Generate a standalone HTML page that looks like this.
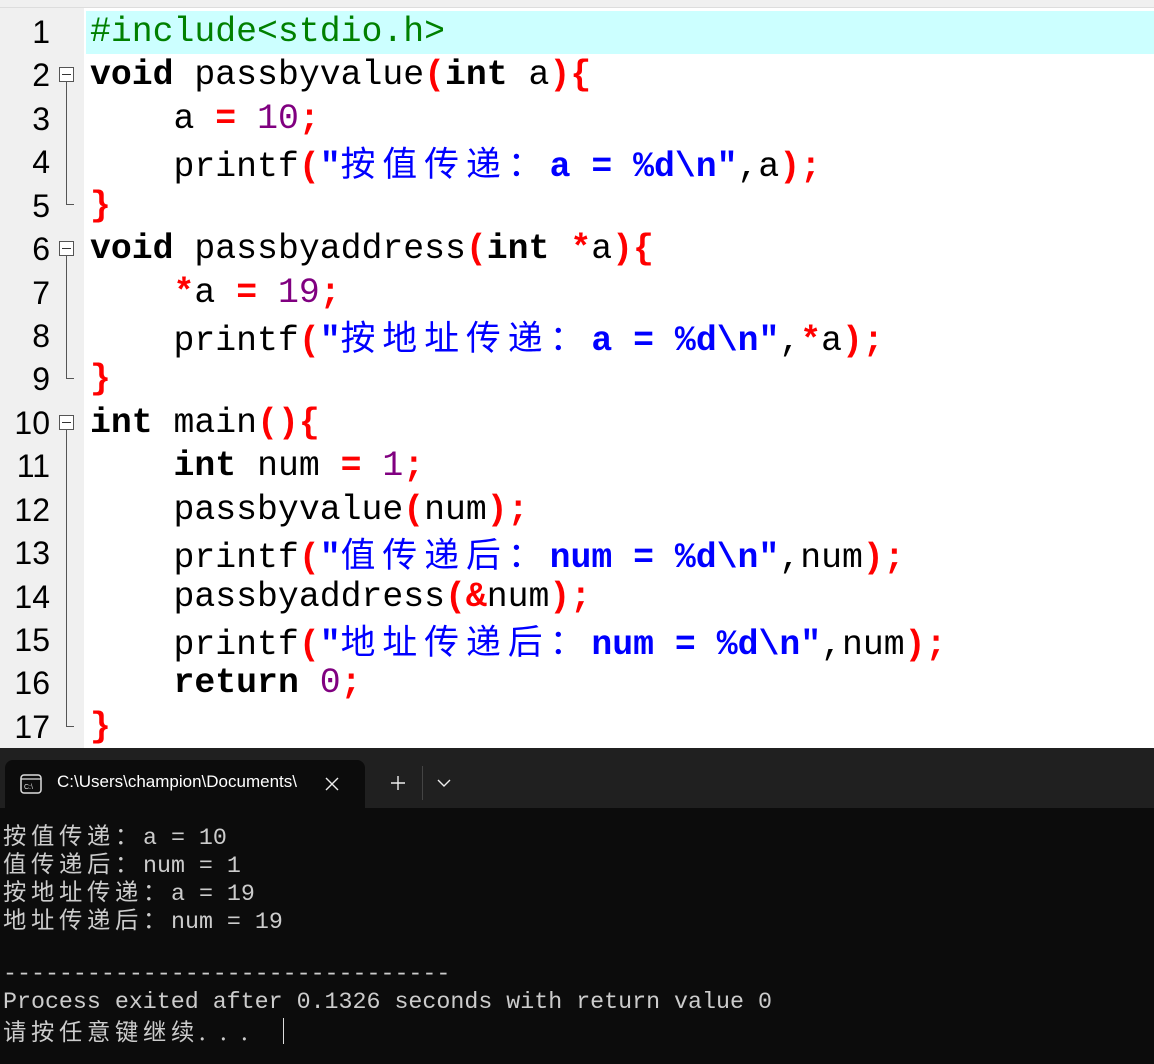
<!DOCTYPE html>
<html><head><meta charset="utf-8"><style>
*{margin:0;padding:0;box-sizing:border-box}
body{width:1154px;height:1064px;overflow:hidden;background:#fff;position:relative;font-family:"Liberation Mono","Noto Sans CJK SC",monospace}
#ruler{position:absolute;left:0;top:0;width:1154px;height:8px;background:#f0f0f0;border-bottom:1px solid #ddd}
#gutter{position:absolute;left:0;top:8px;width:84px;height:740px;background:#f0f0f0}
#hl{position:absolute;left:86px;top:11px;width:1068px;height:43px;background:#ccffff}
.ln{position:absolute;left:0;width:50px;text-align:right;font-size:32px;line-height:43.4px;color:#000;font-family:"Liberation Sans",sans-serif}
.cl{position:absolute;left:90px;font-size:34.8px;line-height:43.4px;white-space:pre;color:#000}
.k{font-weight:bold}
.s{color:#0000ff;font-weight:bold}
.n{color:#800080}
.o{color:#ff0000;font-weight:bold}
.p{color:#008000}
.c{font-family:"Noto Sans CJK SC",sans-serif;letter-spacing:7px;font-weight:normal}
.box{position:absolute;left:59px;width:15px;height:15px;border:1px solid #555;background:#fff}
.box:after{content:"";position:absolute;left:2px;top:6px;width:9px;height:1px;background:#333}
.vl{position:absolute;left:66px;width:1px;background:#555}
.hz{position:absolute;left:66px;width:8px;height:1px;background:#555}
#term{position:absolute;left:0;top:748px;width:1154px;height:316px;background:#0c0c0c}
#tabbar{position:absolute;left:0;top:0;width:1154px;height:60px;background:#202020}
#tab{position:absolute;left:5px;top:12px;width:360px;height:48px;background:#0c0c0c;border-radius:8px 8px 0 0}
.tt{position:absolute;left:3px;font-size:23.3px;line-height:28px;color:#cccccc;white-space:pre}
.tc{font-family:"Noto Sans CJK SC",sans-serif;letter-spacing:4.7px}
</style></head><body>
<div id="ruler"></div>
<div id="gutter"></div>
<div id="hl"></div>

<div class="ln" style="top:11px">1</div>
<div class="ln" style="top:54px">2</div>
<div class="ln" style="top:98px">3</div>
<div class="ln" style="top:141px">4</div>
<div class="ln" style="top:185px">5</div>
<div class="ln" style="top:228px">6</div>
<div class="ln" style="top:272px">7</div>
<div class="ln" style="top:315px">8</div>
<div class="ln" style="top:358px">9</div>
<div class="ln" style="top:402px">10</div>
<div class="ln" style="top:445px">11</div>
<div class="ln" style="top:489px">12</div>
<div class="ln" style="top:532px">13</div>
<div class="ln" style="top:576px">14</div>
<div class="ln" style="top:619px">15</div>
<div class="ln" style="top:662px">16</div>
<div class="ln" style="top:706px">17</div>

<div class="box" style="top:67px"></div>
<div class="vl" style="top:82px;height:122px"></div><div class="hz" style="top:204px"></div>
<div class="box" style="top:241px"></div>
<div class="vl" style="top:256px;height:122px"></div><div class="hz" style="top:378px"></div>
<div class="box" style="top:415px"></div>
<div class="vl" style="top:430px;height:296px"></div><div class="hz" style="top:726px"></div>

<div class="cl" style="top:11px"><span class="p">#include&lt;stdio.h&gt;</span></div>
<div class="cl" style="top:54px"><span class="k">void</span> passbyvalue<span class="o">(</span><span class="k">int</span> a<span class="o">){</span></div>
<div class="cl" style="top:98px">    a <span class="o">=</span> <span class="n">10</span><span class="o">;</span></div>
<div class="cl" style="top:141px">    printf<span class="o">(</span><span class="s">"<span class="c">按值传递：</span>a = %d\n"</span>,a<span class="o">);</span></div>
<div class="cl" style="top:185px"><span class="o">}</span></div>
<div class="cl" style="top:228px"><span class="k">void</span> passbyaddress<span class="o">(</span><span class="k">int</span> <span class="o">*</span>a<span class="o">){</span></div>
<div class="cl" style="top:272px">    <span class="o">*</span>a <span class="o">=</span> <span class="n">19</span><span class="o">;</span></div>
<div class="cl" style="top:315px">    printf<span class="o">(</span><span class="s">"<span class="c">按地址传递：</span>a = %d\n"</span>,<span class="o">*</span>a<span class="o">);</span></div>
<div class="cl" style="top:358px"><span class="o">}</span></div>
<div class="cl" style="top:402px"><span class="k">int</span> main<span class="o">(){</span></div>
<div class="cl" style="top:445px">    <span class="k">int</span> num <span class="o">=</span> <span class="n">1</span><span class="o">;</span></div>
<div class="cl" style="top:489px">    passbyvalue<span class="o">(</span>num<span class="o">);</span></div>
<div class="cl" style="top:532px">    printf<span class="o">(</span><span class="s">"<span class="c">值传递后：</span>num = %d\n"</span>,num<span class="o">);</span></div>
<div class="cl" style="top:576px">    passbyaddress<span class="o">(&amp;</span>num<span class="o">);</span></div>
<div class="cl" style="top:619px">    printf<span class="o">(</span><span class="s">"<span class="c">地址传递后：</span>num = %d\n"</span>,num<span class="o">);</span></div>
<div class="cl" style="top:662px">    <span class="k">return</span> <span class="n">0</span><span class="o">;</span></div>
<div class="cl" style="top:706px"><span class="o">}</span></div>

<div id="term">
 <div id="tabbar">
  <div id="tab">
   <svg style="position:absolute;left:15px;top:13px" width="22" height="22" viewBox="0 0 22 22"><rect x="1" y="2" width="20" height="18" rx="3" fill="none" stroke="#ddd" stroke-width="1.5"/><line x1="1" y1="6" x2="21" y2="6" stroke="#ddd" stroke-width="1.3"/><text x="4" y="16" font-size="7" fill="#ddd" font-family="Liberation Sans">C:\</text></svg>
   <div style="position:absolute;left:52px;top:12px;width:248px;overflow:hidden;white-space:nowrap;color:#fff;font-family:'Liberation Sans',sans-serif;font-size:17px">C:\Users\champion\Documents\</div>
   <svg style="position:absolute;left:320px;top:17px" width="14" height="14"><path d="M1 1L13 13M13 1L1 13" stroke="#eee" stroke-width="1.4"/></svg>
  </div>
  <svg style="position:absolute;left:390px;top:27px" width="16" height="16"><path d="M8 1V15M1 8H15" stroke="#eee" stroke-width="1.4"/></svg>
  <div style="position:absolute;left:422px;top:18px;width:1px;height:34px;background:#444"></div>
  <svg style="position:absolute;left:437px;top:31px" width="14" height="9"><path d="M1 1L7 7L13 1" stroke="#eee" stroke-width="1.4" fill="none"/></svg>
 </div>
 <div class="tt" style="top:72px"><span class="tc">按值传递：</span>a = 10</div>
 <div class="tt" style="top:100px"><span class="tc">值传递后：</span>num = 1</div>
 <div class="tt" style="top:128px"><span class="tc">按地址传递：</span>a = 19</div>
 <div class="tt" style="top:156px"><span class="tc">地址传递后：</span>num = 19</div>
 <div class="tt" style="top:212px">--------------------------------</div>
 <div class="tt" style="top:240px">Process exited after 0.1326 seconds with return value 0</div>
 <div class="tt" style="top:268px"><span class="tc">请按任意键继续. . .</span></div>
 <div style="position:absolute;left:283px;top:270px;width:1px;height:26px;background:#ddd"></div>
</div>
</body></html>
